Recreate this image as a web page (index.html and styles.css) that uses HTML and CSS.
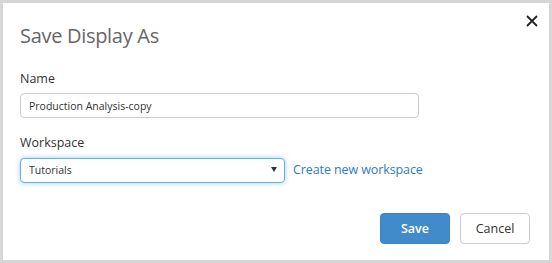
FILE: index.html
```html
<!DOCTYPE html>
<html lang="en">
<head>
    <meta charset="UTF-8">
    <title>Save Display As</title>
    <link rel="stylesheet" href="styles.css">
</head>
<body>
    <div class="modal">
        <button class="close" aria-label="Close">
            <svg width="12" height="12" viewBox="0 0 12 12">
                <path d="M1 1 L11 11 M11 1 L1 11" stroke="#222" stroke-width="1.8" fill="none"/>
            </svg>
        </button>

        <h1 class="title">Save Display As</h1>

        <label class="label" for="name">Name</label>
        <input id="name" class="field name-field" type="text" value="Production Analysis-copy">

        <label class="label label-ws" for="workspace">Workspace</label>
        <div class="ws-row">
            <div class="select-wrap">
                <select id="workspace" class="field select-field">
                    <option>Tutorials</option>
                </select>
                <span class="caret"></span>
            </div>
            <a class="link" href="#">Create new workspace</a>
        </div>

        <div class="actions">
            <button class="btn btn-primary">Save</button>
            <button class="btn btn-default">Cancel</button>
        </div>
    </div>
</body>
</html>
```

FILE: styles.css
```css
/* page frame */
html, body {
    margin: 0;
    padding: 0;
}

body {
    font-family: "Open Sans", "Noto Sans", sans-serif;
    background: #d6d6d6;
    padding: 3px;
    width: 552px;
    height: 263px;
    box-sizing: border-box;
}

/* dialog */
.modal {
    position: relative;
    background: #fff;
    height: 257px;
    box-sizing: border-box;
    padding: 19px 19px 0 17px;
    display: flex;
    flex-direction: column;
    align-items: flex-start;
}

.close {
    position: absolute;
    top: 12px;
    right: 11px;
    width: 12px;
    height: 12px;
    padding: 0;
    border: none;
    background: none;
    cursor: pointer;
    display: flex;
}

.title {
    margin: 0 0 20px 0;
    font-size: 20px;
    line-height: 28px;
    font-weight: 400;
    color: #666;
    letter-spacing: -0.3px;
}

.label {
    font-size: 12.5px;
    line-height: 18px;
    color: #333;
    margin-bottom: 5px;
}

.label-ws {
    margin-top: 16px;
}

/* inputs */
.field {
    font-family: inherit;
    font-size: 10.5px;
    color: #333;
    height: 25px;
    box-sizing: border-box;
    border: 1px solid #ccc;
    border-radius: 4px;
    padding: 0 8px;
    background: #fff;
    outline: none;
}

.name-field {
    width: 399px;
}

.ws-row {
    display: flex;
    align-items: center;
    gap: 8px;
}

.select-wrap {
    position: relative;
    width: 265px;
}

.select-field {
    width: 100%;
    -webkit-appearance: none;
    appearance: none;
    border-color: #66afe9;
    box-shadow: 0 0 5px rgba(102, 175, 233, 0.6);
}

.caret {
    position: absolute;
    right: 8px;
    top: 10px;
    width: 0;
    height: 0;
    border-left: 3px solid transparent;
    border-right: 3px solid transparent;
    border-top: 5px solid #333;
    pointer-events: none;
}

.link {
    font-size: 12.5px;
    color: #2e7bbf;
    text-decoration: none;
    letter-spacing: -0.1px;
}

/* buttons */
.actions {
    align-self: flex-end;
    display: flex;
    gap: 10px;
    margin-top: 30px;
}

.btn {
    font-family: inherit;
    width: 70px;
    height: 31px;
    border-radius: 4px;
    font-size: 12.5px;
    cursor: pointer;
}

.btn-primary {
    background: #428bca;
    border: 1px solid #3d83c0;
    color: #fff;
    font-weight: 600;
}

.btn-default {
    background: #fff;
    border: 1px solid #ccc;
    color: #333;
}
```
